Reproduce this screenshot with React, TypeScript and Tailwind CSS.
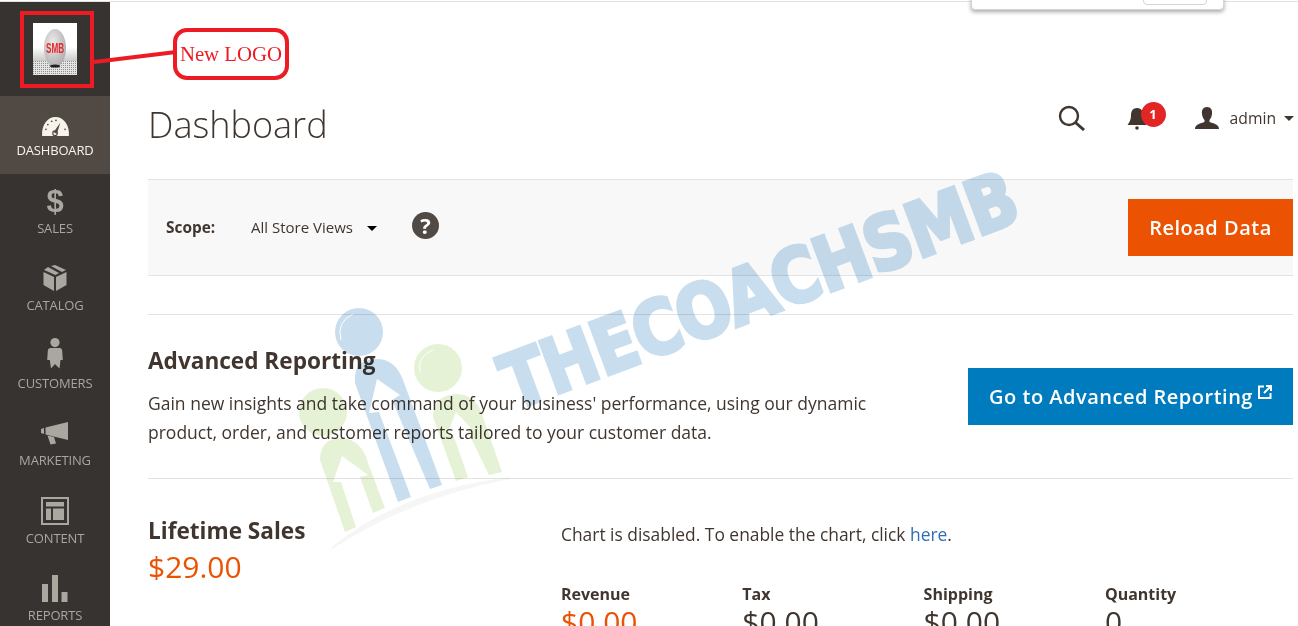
import React from "react";

const navItems = [
  { label: "DASHBOARD", icon: <GaugeIcon />, active: true },
  { label: "SALES", icon: <span className="text-[31px] leading-none font-bold font-['Liberation_Sans',sans-serif]">$</span> },
  { label: "CATALOG", icon: <BoxIcon /> },
  { label: "CUSTOMERS", icon: <PersonIcon /> },
  { label: "MARKETING", icon: <MegaphoneIcon /> },
  { label: "CONTENT", icon: <LayoutIcon /> },
  { label: "REPORTS", icon: <BarsIcon /> },
];

const stats = [
  { label: "Revenue", value: "$0.00", orange: true },
  { label: "Tax", value: "$0.00" },
  { label: "Shipping", value: "$0.00" },
  { label: "Quantity", value: "0" },
];

function GaugeIcon() {
  return (
    <svg width="29" height="21" viewBox="0 0 30 22" className="mt-[6px]">
      <path d="M1 21 C0 9 7 1 15 1 C23 1 30 9 29 21 Z" fill="#f7f3eb" />
      <path d="M13 17 L20 7 L16.5 18.5 Z" fill="#514943" />
      <circle cx="14.5" cy="18" r="2.4" fill="none" stroke="#514943" strokeWidth="1.2" />
      <g fill="#514943">
        <circle cx="5" cy="14" r="0.9" />
        <circle cx="7" cy="9" r="0.9" />
        <circle cx="11" cy="5.5" r="0.9" />
        <circle cx="15.5" cy="4.5" r="0.9" />
        <circle cx="25" cy="14" r="0.9" />
      </g>
    </svg>
  );
}

function BoxIcon() {
  return (
    <svg width="24" height="27" viewBox="0 0 24 27" fill="currentColor">
      <path d="M8 1 L12 0 L23 5 L19 7 Z" />
      <path d="M5 2 L16 8 L12.5 10 L1 5 Z" />
      <path d="M0.5 7 L11 12 L11 26 L0.5 20 Z" />
      <path d="M13 12 L23.5 7 L23.5 20 L13 26 Z" />
    </svg>
  );
}

function PersonIcon() {
  return (
    <svg width="16" height="31" viewBox="0 0 16 31" fill="currentColor" className="-mt-[6px]">
      <circle cx="8" cy="4.6" r="4.6" />
      <path d="M3.5 10 H12.5 Q15 10 15.2 13 L15.8 22 L13.5 22 L12.5 30.5 L8 26 L4 30.5 L2.8 22 L0.2 22 L0.8 13 Q1 10 3.5 10 Z" />
    </svg>
  );
}

function MegaphoneIcon() {
  return (
    <svg width="28" height="23" viewBox="0 0 28 23" fill="currentColor">
      <path d="M0 7 L3 6 V12 L0 11 Z" />
      <path d="M4.5 5.5 L27 0 V18 L4.5 12.5 Z" />
      <path d="M6.5 13.5 L13 15 L15 21.5 L9.5 22.5 Z" />
    </svg>
  );
}

function LayoutIcon() {
  return (
    <svg width="28" height="28" viewBox="0 0 28 28" fill="currentColor">
      <path fillRule="evenodd" d="M0 0 H28 V28 H0 Z M2 2 V26 H26 V2 Z" />
      <rect x="5" y="5" width="18" height="4.5" />
      <rect x="5" y="11.5" width="5" height="11.5" />
      <rect x="12" y="11.5" width="11" height="11.5" />
    </svg>
  );
}

function BarsIcon() {
  return (
    <svg width="26" height="27" viewBox="0 0 26 27" fill="currentColor">
      <rect x="0" y="9" width="6" height="18" />
      <rect x="10" y="0" width="6" height="27" />
      <rect x="19.5" y="17" width="6" height="10" />
    </svg>
  );
}

function LogoImage() {
  return (
    <svg width="44" height="52" viewBox="0 0 44 52" className="block">
      <defs>
        <radialGradient id="ball" cx="0.4" cy="0.35" r="0.75">
          <stop offset="0" stopColor="#ececec" />
          <stop offset="1" stopColor="#a9a7a7" />
        </radialGradient>
        <linearGradient id="haze" x1="0" y1="0" x2="0" y2="1">
          <stop offset="0" stopColor="#ffffff" />
          <stop offset="1" stopColor="#c9c9c9" />
        </linearGradient>
        <pattern id="floor" width="2" height="2" patternUnits="userSpaceOnUse">
          <rect width="1" height="1" fill="#555" />
        </pattern>
      </defs>
      <rect width="44" height="52" fill="#fff" />
      <rect y="24" width="44" height="14" fill="url(#haze)" />
      <rect y="38" width="44" height="14" fill="#e4e4e4" />
      <rect y="38" width="44" height="14" fill="url(#floor)" opacity="0.6" />
      <ellipse cx="22" cy="25" rx="11" ry="19" fill="url(#ball)" />
      <ellipse cx="22" cy="43" rx="5" ry="1.6" fill="#222" />
      <text x="22" y="30" textAnchor="middle" fontFamily="Liberation Sans, sans-serif" fontWeight="700" fontSize="15" fill="#e8272c" textLength="18" lengthAdjust="spacingAndGlyphs">SMB</text>
    </svg>
  );
}

function Watermark() {
  return (
    <div className="absolute inset-0 pointer-events-none overflow-hidden mix-blend-multiply">
      <svg width="1298" height="626" viewBox="0 0 1298 626" fill="none" className="absolute left-0 top-0">
        <path d="M332 548 Q400 492 510 478 Q410 497 332 548 Z" fill="#f6f7f4" stroke="#f6f7f4" strokeWidth="2" />
        <circle cx="323" cy="412" r="24" fill="#e6f2d6" />
        <circle cx="438" cy="368" r="24" fill="#e6f2d6" />
        <path d="M320 460 Q320 438 342 438 Q362 440 368 463 L385 508 L373 513 L360 477 L368 475 L342 456 L333 482 L341 482 L356 527 L345 532 Z" fill="#e6f2d6" />
        <path d="M433 417 Q433 395 457 394 Q477 395 483 417 L502 472 L489 475 L468 432 L471 428 L456 412 L447 435 L453 434 L468 477 L456 481 Z" fill="#e6f2d6" />
        <circle cx="359" cy="332" r="24" fill="#c8deef" />
        <path d="M355 383 Q353 360 375 359 Q395 358 403 380 L442 485 L430 489 L392 400 L400 395 L377 379 L369 413 L379 412 L411 497 L398 502 Z" fill="#c8deef" />
        <path d="M341 340 Q336 322 353 314" stroke="#fff" strokeWidth="1" />
        <path d="M420 372 Q417 356 433 350" stroke="#fff" strokeWidth="1" />
      </svg>
      <div className="absolute left-[759px] top-[291px] [transform:translate(-50%,-50%)_rotate(-20.5deg)_scaleX(0.86)] text-[75px] leading-none font-bold tracking-[-1px] text-[#c8deef] [-webkit-text-stroke:4px_#c8deef] font-['DejaVu_Sans',sans-serif] whitespace-nowrap">
        THECOACHSMB
      </div>
    </div>
  );
}

export default function App() {
  return (
    <div className="relative h-[626px] w-[1298px] overflow-hidden bg-white font-['Open_Sans',sans-serif] text-[#41362f]">
      <div className="h-[2px] border-b border-[#e3e3e3]" />
      <div className="flex h-[624px]">
        <aside className="w-[110px] shrink-0 bg-[#373330]">
          <div className="h-[94px] flex items-center justify-center pb-[1px]">
            <LogoImage />
          </div>
          {navItems.map((item) => (
            <div
              key={item.label}
              className={
                item.active
                  ? "h-[77.5px] pt-[10px] flex flex-col items-center bg-[#514943] text-[#f7f3eb]"
                  : "h-[77.5px] pt-[10px] flex flex-col items-center text-[#aaa6a0]"
              }
            >
              <div className="h-[35px] flex items-center justify-center">{item.icon}</div>
              <div className="h-[18px] text-[13px] leading-[18px] tracking-[-0.15px]">{item.label}</div>
            </div>
          ))}
        </aside>

        <main className="flex-1 min-w-0 pl-[38px] pr-[5px]">
          <header className="h-[177px] pt-[68px] flex items-center justify-between">
            <h1 className="text-[36px] font-light leading-none">Dashboard</h1>
            <div className="flex items-center pb-[13px] -mr-[1px]">
              <svg width="28" height="26" viewBox="0 0 28 26" fill="none" stroke="#41362f" className="mr-[41px]">
                <circle cx="11" cy="11" r="9" strokeWidth="2.4" />
                <path d="M17.5 17.5 L26 25" strokeWidth="3" />
              </svg>
              <div className="relative w-[39px] h-[26px] mr-[29px]">
                <svg width="20" height="22" viewBox="0 0 20 22" fill="#41362f" className="absolute left-0 top-[3px]">
                  <path d="M10 0 C15 0 16 4 16 8 C16 12 18 15 19.5 17 H0.5 C2 15 4 12 4 8 C4 4 5 0 10 0 Z" />
                  <circle cx="10" cy="20" r="1.8" />
                </svg>
                <div className="absolute left-[14px] -top-[3px] w-[25px] h-[25px] rounded-full bg-[#e22626] flex items-center justify-center text-white text-[13px] font-bold leading-none">
                  1
                </div>
              </div>
              <svg width="24" height="22" viewBox="0 0 24 22" fill="#41362f" className="mr-[11px]">
                <path d="M12 0 C16 0 17.5 3 17 7 C16.7 10 15.5 12 14.5 13 V15 C18 16.5 24 17 24 22 H0 C0 17 6 16.5 9.5 15 V13 C8.5 12 7.3 10 7 7 C6.5 3 8 0 12 0 Z" />
              </svg>
              <span className="mt-[1px] text-[15.7px] leading-none">admin</span>
              <span className="ml-[8px] w-0 h-0 border-x-[5px] border-x-transparent border-t-[5px] border-t-[#41362f]" />
            </div>
          </header>

          <section className="h-[97px] border-y border-[#e3e3e3] bg-[#f8f8f8] pl-[18px] flex items-center justify-between">
            <div className="flex items-center">
              <span className="w-[85px] text-[15.4px] font-bold">Scope:</span>
              <span className="text-[15px]">All Store Views</span>
              <span className="ml-[14px] mt-[3px] w-0 h-0 border-x-[5px] border-x-transparent border-t-[5px] border-t-black" />
              <span className="ml-[35px] -mt-[4px] w-[27px] h-[27px] rounded-full bg-[#514943] flex items-center justify-center text-white text-[22px] font-bold leading-none">
                ?
              </span>
            </div>
            <button className="w-[165px] h-[57px] pt-[1px] bg-[#eb5202] text-white text-[20px] tracking-[0.5px] font-semibold">Reload Data</button>
          </section>

          <section className="mt-[38px] h-[165px] border-y border-[#e3e3e3] flex items-center justify-between">
            <div className="w-[725px] -mt-[1px]">
              <h2 className="text-[22.6px] leading-[30px] font-bold">Advanced Reporting</h2>
              <p className="mt-[13px] text-[17.5px] leading-[29px]">
                Gain new insights and take command of your business' performance, using our dynamic product, order, and customer reports tailored to your customer data.
              </p>
            </div>
            <button className="w-[325px] h-[57px] pt-[1px] bg-[#007bbd] text-white text-[20px] tracking-[0.5px] font-semibold flex items-center justify-center gap-[5px]">
              Go to Advanced Reporting
              <svg width="14" height="14" viewBox="0 0 14 14" fill="none" stroke="#fff" strokeWidth="2" className="-mt-[10px]">
                <path d="M6 1.5 H1 V13 H12.5 V8" />
                <path d="M8 1 H13 V6 M13 1 L6 8" />
              </svg>
            </button>
          </section>

          <section className="flex">
            <div className="w-[413px] pt-[37px]">
              <h2 className="text-[22.6px] leading-[30px] font-bold">Lifetime Sales</h2>
              <div className="mt-[1px] text-[30px] leading-[40px] text-[#eb5202]">$29.00</div>
            </div>
            <div className="pt-[43px]">
              <p className="text-[17.4px] leading-[24px]">
                Chart is disabled. To enable the chart, click <a className="text-[#2f6cb5]">here</a>.
              </p>
              <div className="mt-[37px] grid grid-cols-[repeat(4,181.3px)]">
                {stats.map((s) => (
                  <div key={s.label}>
                    <div className="text-[16px] leading-[22px] font-bold">{s.label}</div>
                    <div className={s.orange ? "-mt-[3px] text-[30px] leading-[40px] text-[#eb5202]" : "-mt-[3px] text-[30px] leading-[40px]"}>
                      {s.value}
                    </div>
                  </div>
                ))}
              </div>
            </div>
          </section>
        </main>
      </div>

      <Watermark />

      {/* browser popup left over at the top of the page */}
      <div className="absolute left-[971px] -top-[4px] w-[253px] h-[14px] bg-white rounded-[4px] border border-[#d5d5d5] shadow-[0_2px_4px_rgba(0,0,0,0.35)]">
        <div className="absolute right-[16px] -top-[6px] w-[64px] h-[14px] rounded-[4px] border border-[#d5d5d5]" />
      </div>

      {/* annotation drawn on the screenshot */}
      <div className="absolute left-[20px] top-[11px] w-[74px] h-[77px] border-[4px] border-[#ed1c24]" />
      <svg width="90" height="20" viewBox="0 0 90 20" className="absolute left-[92px] top-[46px]">
        <path d="M2 16 L84 6" stroke="#ed1c24" strokeWidth="4" fill="none" />
      </svg>
      <div className="absolute left-[173px] top-[28px] w-[116px] h-[52px] rounded-[14px] border-[4px] border-[#ed1c24] flex items-center justify-center text-[#ed1c24] text-[20.8px] font-['Liberation_Serif',serif] leading-none whitespace-nowrap">
        New LOGO
      </div>
    </div>
  );
}
